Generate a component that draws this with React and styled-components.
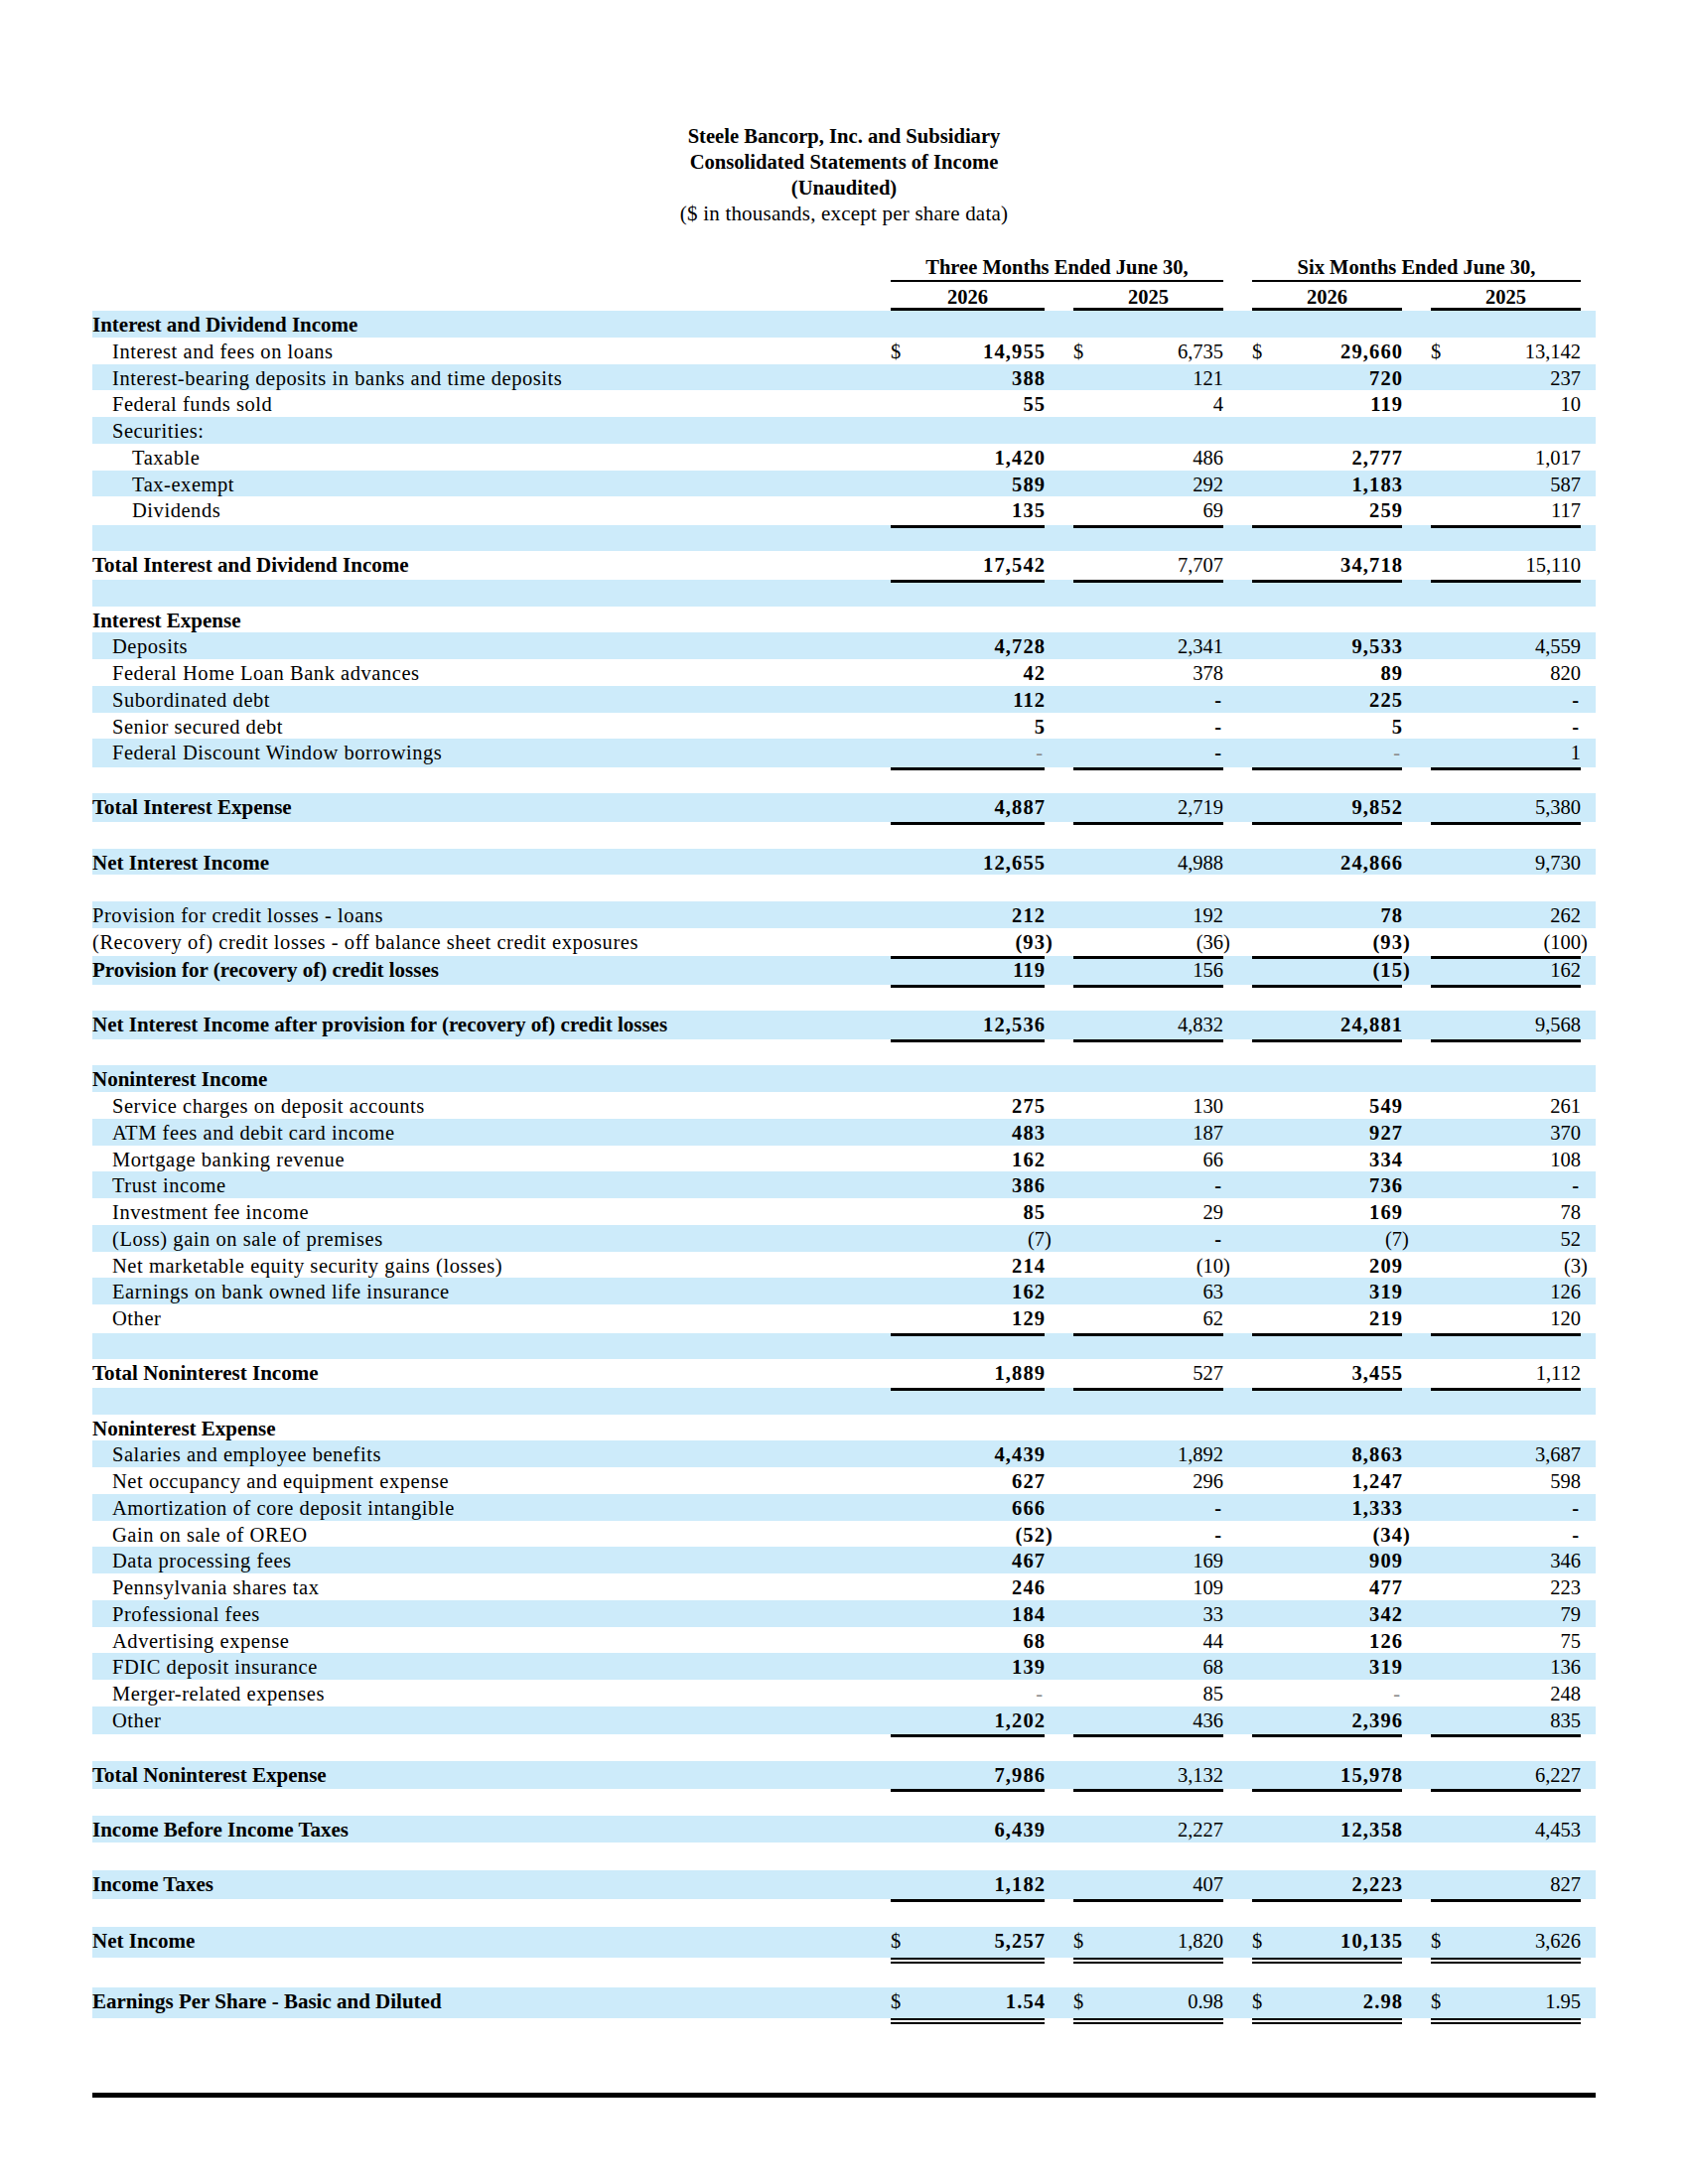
import React from 'react';
import styled, { createGlobalStyle, css } from 'styled-components';

const GlobalStyle = createGlobalStyle`
  html, body { margin: 0; padding: 0; background: #fff; }
  body { font-family: "Liberation Serif", "Times New Roman", serif; color: #000; }
`;

const BLUE = '#cdebfa';
const COLS = '775px 155px 151px 151px 151px';
const GAP = '29px';

const Page = styled.div`
  width: 1700px;
  min-height: 2200px;
  box-sizing: border-box;
  padding: 124px 93px 0;
`;

const TitleBlock = styled.header`
  text-align: center;
  line-height: 26px;
`;

const TitleLine = styled.div`
  font-size: ${p => (p.$sub ? '21px' : '20.6px')};
  font-weight: ${p => (p.$sub ? 400 : 700)};
  letter-spacing: ${p => (p.$sub ? '0.2px' : '0')};
`;

const HeadGrid = styled.div`
  display: grid;
  grid-template-columns: ${COLS};
  column-gap: ${GAP};
  padding-right: 15px;
  margin-top: 28px;
  font-weight: 700;
  font-size: 20.5px;
`;

const GroupHead = styled.div`
  grid-row: 1;
  grid-column: ${p => p.$start} / span 2;
  text-align: center;
  line-height: 26px;
  border-bottom: 2px solid #000;
`;

const YearHead = styled.div`
  grid-row: 2;
  grid-column: ${p => p.$col};
  text-align: center;
  padding-top: 4px;
  line-height: 22px;
  border-bottom: 3px solid #000;
`;

const Body = styled.div`
  display: flex;
  flex-direction: column;
`;

const Row = styled.div`
  display: grid;
  grid-template-columns: ${COLS};
  column-gap: ${GAP};
  box-sizing: border-box;
  padding: 1px 15px 0 0;
  height: ${p => p.$h}px;
  background: ${p => (p.$shade ? BLUE : '#fff')};
  font-size: 20.5px;
  line-height: 26.7px;
`;

const Label = styled.div`
  padding-left: ${p => p.$level * 20}px;
  font-size: ${p => (p.$bold ? '21px' : '20.5px')};
  font-weight: ${p => (p.$bold ? 700 : 400)};
  letter-spacing: ${p => (p.$bold ? '0' : '0.55px')};
  white-space: nowrap;
`;

const Cell = styled.div`
  position: relative;
  display: flex;
  justify-content: space-between;
  white-space: nowrap;
  ${p =>
    p.$rule === 'single' &&
    css`
      &::after {
        content: '';
        position: absolute;
        left: 0;
        right: 0;
        top: 100%;
        height: 3px;
        background: #000;
        z-index: 1;
      }
    `}
  ${p =>
    p.$rule === 'double' &&
    css`
      &::after {
        content: '';
        position: absolute;
        left: 0;
        right: 0;
        top: 100%;
        height: 0;
        border-top: 6px double #000;
        z-index: 1;
      }
    `}
`;

const Dollar = styled.span`
  font-weight: 400;
`;

const Amount = styled.span`
  font-weight: ${p => (p.$bold ? 700 : 400)};
  letter-spacing: ${p => (p.$bold ? '1.1px' : '0px')};
  margin-right: ${p => (p.$bold ? '-1.1px' : '0px')};
`;

const Paren = styled.span`
  margin-right: ${p => (p.$bold ? 'calc(-0.333em - 1.1px)' : '-0.333em')};
`;

const Dash = styled.span`
  font-weight: ${p => (p.$light ? 400 : 700)};
  color: ${p => (p.$light ? '#8a8a8a' : '#000')};
  margin-right: 2px;
`;

const BottomRule = styled.div`
  margin-top: 75px;
  height: 5px;
  background: #000;
`;

const reg = v => ({ v, regular: true });

const rows = [
  { label: 'Interest and Dividend Income', bold: true },
  { label: 'Interest and fees on loans', level: 1, vals: ['14,955', '6,735', '29,660', '13,142'], dollar: true },
  { label: 'Interest-bearing deposits in banks and time deposits', level: 1, vals: ['388', '121', '720', '237'] },
  { label: 'Federal funds sold', level: 1, vals: ['55', '4', '119', '10'] },
  { label: 'Securities:', level: 1 },
  { label: 'Taxable', level: 2, vals: ['1,420', '486', '2,777', '1,017'] },
  { label: 'Tax-exempt', level: 2, vals: ['589', '292', '1,183', '587'] },
  { label: 'Dividends', level: 2, vals: ['135', '69', '259', '117'], rule: 'single' },
  {},
  { label: 'Total Interest and Dividend Income', bold: true, vals: ['17,542', '7,707', '34,718', '15,110'], rule: 'single' },
  {},
  { label: 'Interest Expense', bold: true },
  { label: 'Deposits', level: 1, vals: ['4,728', '2,341', '9,533', '4,559'] },
  { label: 'Federal Home Loan Bank advances', level: 1, vals: ['42', '378', '89', '820'] },
  { label: 'Subordinated debt', level: 1, vals: ['112', '-', '225', '-'] },
  { label: 'Senior secured debt', level: 1, vals: ['5', '-', '5', '-'] },
  { label: 'Federal Discount Window borrowings', level: 1, vals: ['-', '-', '-', '1'], rule: 'single' },
  {},
  { label: 'Total Interest Expense', bold: true, vals: ['4,887', '2,719', '9,852', '5,380'], rule: 'single' },
  {},
  { label: 'Net Interest Income', bold: true, vals: ['12,655', '4,988', '24,866', '9,730'] },
  {},
  { label: 'Provision for credit losses - loans', vals: ['212', '192', '78', '262'] },
  { label: '(Recovery of) credit losses - off balance sheet credit exposures', vals: ['(93)', '(36)', '(93)', '(100)'], rule: 'single' },
  { label: 'Provision for (recovery of) credit losses', bold: true, vals: ['119', '156', '(15)', '162'], rule: 'single' },
  {},
  { label: 'Net Interest Income after provision for (recovery of) credit losses', bold: true, vals: ['12,536', '4,832', '24,881', '9,568'], rule: 'single' },
  {},
  { label: 'Noninterest Income', bold: true },
  { label: 'Service charges on deposit accounts', level: 1, vals: ['275', '130', '549', '261'] },
  { label: 'ATM fees and debit card income', level: 1, vals: ['483', '187', '927', '370'] },
  { label: 'Mortgage banking revenue', level: 1, vals: ['162', '66', '334', '108'] },
  { label: 'Trust income', level: 1, vals: ['386', '-', '736', '-'] },
  { label: 'Investment fee income', level: 1, vals: ['85', '29', '169', '78'] },
  { label: '(Loss) gain on sale of premises', level: 1, vals: [reg('(7)'), '-', reg('(7)'), '52'] },
  { label: 'Net marketable equity security gains (losses)', level: 1, vals: ['214', '(10)', '209', '(3)'] },
  { label: 'Earnings on bank owned life insurance', level: 1, vals: ['162', '63', '319', '126'] },
  { label: 'Other', level: 1, vals: ['129', '62', '219', '120'], rule: 'single' },
  {},
  { label: 'Total Noninterest Income', bold: true, vals: ['1,889', '527', '3,455', '1,112'], rule: 'single' },
  {},
  { label: 'Noninterest Expense', bold: true },
  { label: 'Salaries and employee benefits', level: 1, vals: ['4,439', '1,892', '8,863', '3,687'] },
  { label: 'Net occupancy and equipment expense', level: 1, vals: ['627', '296', '1,247', '598'] },
  { label: 'Amortization of core deposit intangible', level: 1, vals: ['666', '-', '1,333', '-'] },
  { label: 'Gain on sale of OREO', level: 1, vals: ['(52)', '-', '(34)', '-'] },
  { label: 'Data processing fees', level: 1, vals: ['467', '169', '909', '346'] },
  { label: 'Pennsylvania shares tax', level: 1, vals: ['246', '109', '477', '223'] },
  { label: 'Professional fees', level: 1, vals: ['184', '33', '342', '79'] },
  { label: 'Advertising expense', level: 1, vals: ['68', '44', '126', '75'] },
  { label: 'FDIC deposit insurance', level: 1, vals: ['139', '68', '319', '136'] },
  { label: 'Merger-related expenses', level: 1, vals: ['-', '85', '-', '248'] },
  { label: 'Other', level: 1, vals: ['1,202', '436', '2,396', '835'], rule: 'single' },
  {},
  { label: 'Total Noninterest Expense', bold: true, vals: ['7,986', '3,132', '15,978', '6,227'], rule: 'single' },
  {},
  { label: 'Income Before Income Taxes', bold: true, vals: ['6,439', '2,227', '12,358', '4,453'] },
  { h: 28.5 },
  { label: 'Income Taxes', bold: true, vals: ['1,182', '407', '2,223', '827'], rule: 'single' },
  { h: 28.5 },
  { label: 'Net Income', bold: true, vals: ['5,257', '1,820', '10,135', '3,626'], dollar: true, rule: 'double' },
  { h: 29.5 },
  { label: 'Earnings Per Share - Basic and Diluted', bold: true, vals: ['1.54', '0.98', '2.98', '1.95'], dollar: true, rule: 'double' },
];

function rowHeight(r) {
  if (r.h) return r.h;
  if (r.rule === 'double') return 31;
  if (r.rule === 'single') return 28.4;
  return 26.75;
}

function NumberCell({ value, col, dollar, rule }) {
  const boldCol = col % 2 === 0;
  let v = value;
  let regular = false;
  if (value && typeof value === 'object') {
    v = value.v;
    regular = value.regular;
  }
  const b = boldCol && !regular;
  let content;
  if (v === '-') {
    content = <Dash $light={boldCol}>-</Dash>;
  } else if (v.endsWith(')')) {
    content = (
      <Amount $bold={b}>
        {v.slice(0, -1)}
        <Paren $bold={b}>)</Paren>
      </Amount>
    );
  } else {
    content = <Amount $bold={b}>{v}</Amount>;
  }
  return (
    <Cell $rule={rule}>
      <Dollar>{dollar ? '$' : ''}</Dollar>
      {content}
    </Cell>
  );
}

export default function App() {
  return (
    <>
      <GlobalStyle />
      <Page>
        <TitleBlock>
          <TitleLine>Steele Bancorp, Inc. and Subsidiary</TitleLine>
          <TitleLine>Consolidated Statements of Income</TitleLine>
          <TitleLine>(Unaudited)</TitleLine>
          <TitleLine $sub>($ in thousands, except per share data)</TitleLine>
        </TitleBlock>
        <HeadGrid>
          <GroupHead $start={2}>Three Months Ended June 30,</GroupHead>
          <GroupHead $start={4}>Six Months Ended June 30,</GroupHead>
          <YearHead $col={2}>2026</YearHead>
          <YearHead $col={3}>2025</YearHead>
          <YearHead $col={4}>2026</YearHead>
          <YearHead $col={5}>2025</YearHead>
        </HeadGrid>
        <Body>
          {rows.map((r, i) => (
            <Row key={i} $shade={i % 2 === 0} $h={rowHeight(r)}>
              <Label $level={r.level || 0} $bold={r.bold}>
                {r.label || ''}
              </Label>
              {r.vals &&
                r.vals.map((v, c) => (
                  <NumberCell key={c} value={v} col={c} dollar={r.dollar} rule={r.rule} />
                ))}
            </Row>
          ))}
        </Body>
        <BottomRule />
      </Page>
    </>
  );
}
